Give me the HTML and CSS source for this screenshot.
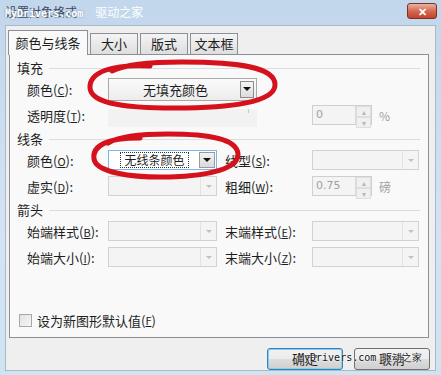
FILE: index.html
```html
<!DOCTYPE html>
<html>

<head>
    <meta charset="UTF-8" />
    <title>设置对象格式</title>
    <link rel="stylesheet" href="styles.css">
</head>

<body>
    <div class="window">
        <div class="titlebar">
            <span class="title">设置对象格式</span>
            <span class="close">✕</span>
        </div>
        <div class="client">
            <div class="tabs">
                <div class="tab active">颜色与线条</div>
                <div class="tab">大小</div>
                <div class="tab">版式</div>
                <div class="tab">文本框</div>
            </div>
            <div class="panel">
                <div class="head">填充</div>
                <div class="row">
                    <span class="label">颜色(<u>C</u>):</span>
                    <div class="combo picker">
                        <span class="value">无填充颜色</span>
                        <span class="drop"><i class="tri"></i></span>
                    </div>
                </div>
                <div class="row">
                    <span class="label">透明度(<u>T</u>):</span>
                    <div class="slider"><i class="tick"></i></div>
                    <div class="spin off">
                        <span class="value">0</span>
                        <span class="arrows"><i>▴</i><i>▾</i></span>
                    </div>
                    <span class="unit">%</span>
                </div>

                <div class="head">线条</div>
                <div class="row">
                    <span class="label">颜色(<u>O</u>):</span>
                    <div class="combo focus">
                        <span class="value"><span class="dotted">无线条颜色</span></span>
                        <span class="drop"><i class="tri"></i></span>
                    </div>
                    <span class="label second">线型(<u>S</u>):</span>
                    <div class="combo off wide"><span class="value"></span><span class="drop"><i class="tri"></i></span></div>
                </div>
                <div class="row">
                    <span class="label">虚实(<u>D</u>):</span>
                    <div class="combo off"><span class="value"></span><span class="drop"><i class="tri"></i></span></div>
                    <span class="label second">粗细(<u>W</u>):</span>
                    <div class="spin off">
                        <span class="value">0.75</span>
                        <span class="arrows"><i>▴</i><i>▾</i></span>
                    </div>
                    <span class="unit">磅</span>
                </div>

                <div class="head">箭头</div>
                <div class="row">
                    <span class="label">始端样式(<u>B</u>):</span>
                    <div class="combo off"><span class="value"></span><span class="drop"><i class="tri"></i></span></div>
                    <span class="label second">末端样式(<u>E</u>):</span>
                    <div class="combo off wide"><span class="value"></span><span class="drop"><i class="tri"></i></span></div>
                </div>
                <div class="row">
                    <span class="label">始端大小(<u>I</u>):</span>
                    <div class="combo off"><span class="value"></span><span class="drop"><i class="tri"></i></span></div>
                    <span class="label second">末端大小(<u>Z</u>):</span>
                    <div class="combo off wide"><span class="value"></span><span class="drop"><i class="tri"></i></span></div>
                </div>

                <label class="check"><i class="box"></i>设为新图形默认值(<u>F</u>)</label>
            </div>
            <div class="buttons">
                <div class="btn default">确定</div>
                <div class="btn">取消</div>
            </div>
        </div>

        <!-- watermarks and the red marks drawn over the screenshot -->
        <div class="mark mark-top">MyDrivers.com <span>驱动之家</span></div>
        <div class="mark mark-bottom">MyDrivers.com 驱动之家</div>
        <svg class="ink" width="441" height="375" viewBox="0 0 441 375">
            <path d="M150 66 C112 64 89 72 90 88 C91 104 128 109 186 108 C242 107 276 100 275 84 C274 68 242 62 182 62 C150 62 124 65 112 71" />
            <path d="M140 138 C106 138 92 146 94 159 C96 172 130 178 170 177 C210 176 239 168 238 154 C237 139 210 134 168 134 C142 134 118 137 108 143" />
        </svg>
    </div>
</body>

</html>
```

FILE: styles.css
```css
* {
    margin: 0;
    padding: 0;
    box-sizing: border-box;
}

body {
    background: #c9dcef;
    font-family: "Noto Sans CJK SC", "Noto Sans", sans-serif;
    font-size: 13px;
    color: #1e1e1e;
}

.window {
    position: relative;
    width: 441px;
    height: 375px;
    background: linear-gradient(#c2d6ec, #d3e3f3 60%, #cfe3f1);
    padding: 0 5px 4px 5px;
    display: flex;
    flex-direction: column;
    overflow: hidden;
}

.titlebar {
    height: 25px;
    display: flex;
    align-items: center;
    justify-content: space-between;
}

.title {
    font-size: 12px;
    color: #3b4a5c;
    margin-top: -2px;
}

.close {
    width: 30px;
    height: 16px;
    margin-top: -4px;
    margin-right: -1px;
    border: 1px solid #7a3224;
    border-radius: 3px;
    background: linear-gradient(#eab2a2, #d56a50 50%, #c2432a);
    color: #fff;
    font-size: 11px;
    font-weight: bold;
    text-align: center;
    line-height: 14px;
}

.client {
    flex: 1;
    background: #efefef;
    border: 1px solid #a9b9c8;
    padding-top: 3px;
    display: flex;
    flex-direction: column;
}

.tabs {
    display: flex;
    align-items: flex-end;
    margin-left: 2px;
    height: 25px;
    position: relative;
    z-index: 1;
}

.tab {
    height: 21px;
    width: 48px;
    margin-left: 2px;
    border: 1px solid #8c8f98;
    border-bottom: none;
    background: linear-gradient(#f4f4f4, #dedede);
    text-align: center;
    line-height: 20px;
}

.tab.active {
    height: 25px;
    width: 80px;
    margin-left: 0;
    margin-bottom: -1px;
    background: #f9f9f9;
    line-height: 24px;
}

.panel {
    height: 284px;
    margin: 0 6px 0 3px;
    border: 1px solid #8c8f98;
    background: #f9f9f9;
    padding-top: 4px;
    display: flex;
    flex-direction: column;
}

.head {
    display: flex;
    align-items: center;
    height: 16px;
    padding-left: 7px;
    margin-top: 3px;
}

.head:first-child {
    margin-top: 0;
}

.head::after {
    content: "";
    flex: 1;
    height: 1px;
    margin: 2px 8px 0 6px;
    background: #d6dde4;
}

.row {
    display: flex;
    align-items: center;
    height: 24px;
    padding-left: 17px;
    margin-top: 2px;
}

.label {
    width: 81px;
    white-space: nowrap;
}

.label.second {
    width: 87px;
    margin-left: 8px;
}

u {
    text-decoration: underline;
    font-size: 11px;
}

.combo {
    display: flex;
    width: 109px;
    height: 20px;
    border: 1px solid #abadb3;
    background: #fff;
}

.combo .value {
    flex: 1;
    display: flex;
    align-items: center;
    justify-content: center;
}

.combo .drop {
    width: 16px;
    display: flex;
    align-items: center;
    justify-content: center;
    border-left: 1px solid #d9d9d9;
}

.tri {
    width: 0;
    height: 0;
    border-left: 4px solid transparent;
    border-right: 4px solid transparent;
    border-top: 4px solid #111;
}

.combo.picker {
    width: 149px;
    height: 23px;
    border-color: #a9a9a9;
    background: linear-gradient(#fbfbfb, #ececec);
    padding: 2px;
}

.combo.picker .drop {
    width: 14px;
    border: 1px solid #8d8d8d;
    background: linear-gradient(#f5f5f5, #dcdcdc);
}

.combo.focus {
    border-color: #7eb4ea;
    padding: 1px;
}

.combo.focus .drop {
    background: linear-gradient(#f3f3f3, #dadada);
    border: 1px solid #9a9a9a;
}

.dotted {
    border: 1px dotted #333;
    padding: 0 3px;
    line-height: 14px;
    font-size: 12px;
    background: #fff;
}

.combo.off {
    border-color: #d2d2d2;
    background: #f4f4f4;
}

.combo.off .drop {
    border-left-color: #e2e2e2;
}

.combo.off .tri {
    border-top-color: #c0c0c0;
    border-left-width: 3px;
    border-right-width: 3px;
    border-top-width: 3px;
}

.combo.wide {
    width: 107px;
}

.slider {
    position: relative;
    width: 149px;
    height: 18px;
    margin-top: 6px;
    background: #f2f2f2;
}

.tick {
    position: absolute;
    left: 140px;
    top: 0;
    width: 1px;
    height: 4px;
    background: #c8c8c8;
}

.spin {
    display: flex;
    width: 60px;
    height: 20px;
    border: 1px solid #cfcfcf;
    background: #f4f4f4;
    color: #a0a0a0;
}

.row .slider + .spin {
    margin-left: 55px;
}

.spin .value {
    flex: 1;
    padding-left: 3px;
    line-height: 18px;
    font-family: "DejaVu Sans", sans-serif;
    font-size: 11px;
}

.spin .arrows {
    width: 16px;
    display: flex;
    flex-direction: column;
    border-left: 1px solid #d9d9d9;
}

.spin .arrows i {
    flex: 1;
    font-style: normal;
    font-size: 8px;
    line-height: 9px;
    text-align: center;
    color: #b8b8b8;
    border: 1px solid #dedede;
    background: #f0f0f0;
}

.unit {
    margin-left: 7px;
    color: #a0a0a0;
    font-size: 12px;
}

.check {
    display: flex;
    align-items: center;
    margin-top: auto;
    margin-bottom: 7px;
    height: 20px;
    padding-left: 9px;
}

.box {
    width: 13px;
    height: 13px;
    margin-right: 5px;
    border: 1px solid #a8a8a8;
    background: linear-gradient(135deg, #e2e2e2, #f6f6f6);
}

.buttons {
    display: flex;
    justify-content: flex-end;
    gap: 11px;
    padding: 10px 5px 0 0;
}

.btn {
    width: 76px;
    height: 22px;
    border: 1px solid #707070;
    border-radius: 3px;
    background: linear-gradient(#f2f2f2, #ebebeb 50%, #dddddd 51%, #cfcfcf);
    text-align: center;
    line-height: 20px;
}

.btn.default {
    border-color: #3c7fb1;
    box-shadow: inset 0 0 0 1px #7fd0f2;
}

.mark {
    position: absolute;
    white-space: nowrap;
}

.mark-top {
    left: 5px;
    top: 3px;
    font-family: "DejaVu Sans Mono", monospace;
    font-size: 10px;
    font-weight: bold;
    color: #fff;
    text-shadow: 0 0 2px #6a7f9a;
}

.mark-top span {
    font-family: "Noto Sans CJK SC", sans-serif;
    font-weight: normal;
    font-size: 12px;
    margin-left: 6px;
    text-shadow: none;
}

.mark-bottom {
    left: 298px;
    top: 351px;
    font-family: "DejaVu Sans Mono", monospace;
    font-size: 10px;
    color: #111;
    text-shadow: 0 0 2px #fff, 0 0 2px #fff;
}

.ink {
    position: absolute;
    left: 0;
    top: 0;
    pointer-events: none;
}

.ink path {
    fill: none;
    stroke: #d5111c;
    stroke-width: 5;
    stroke-linecap: round;
}
```
